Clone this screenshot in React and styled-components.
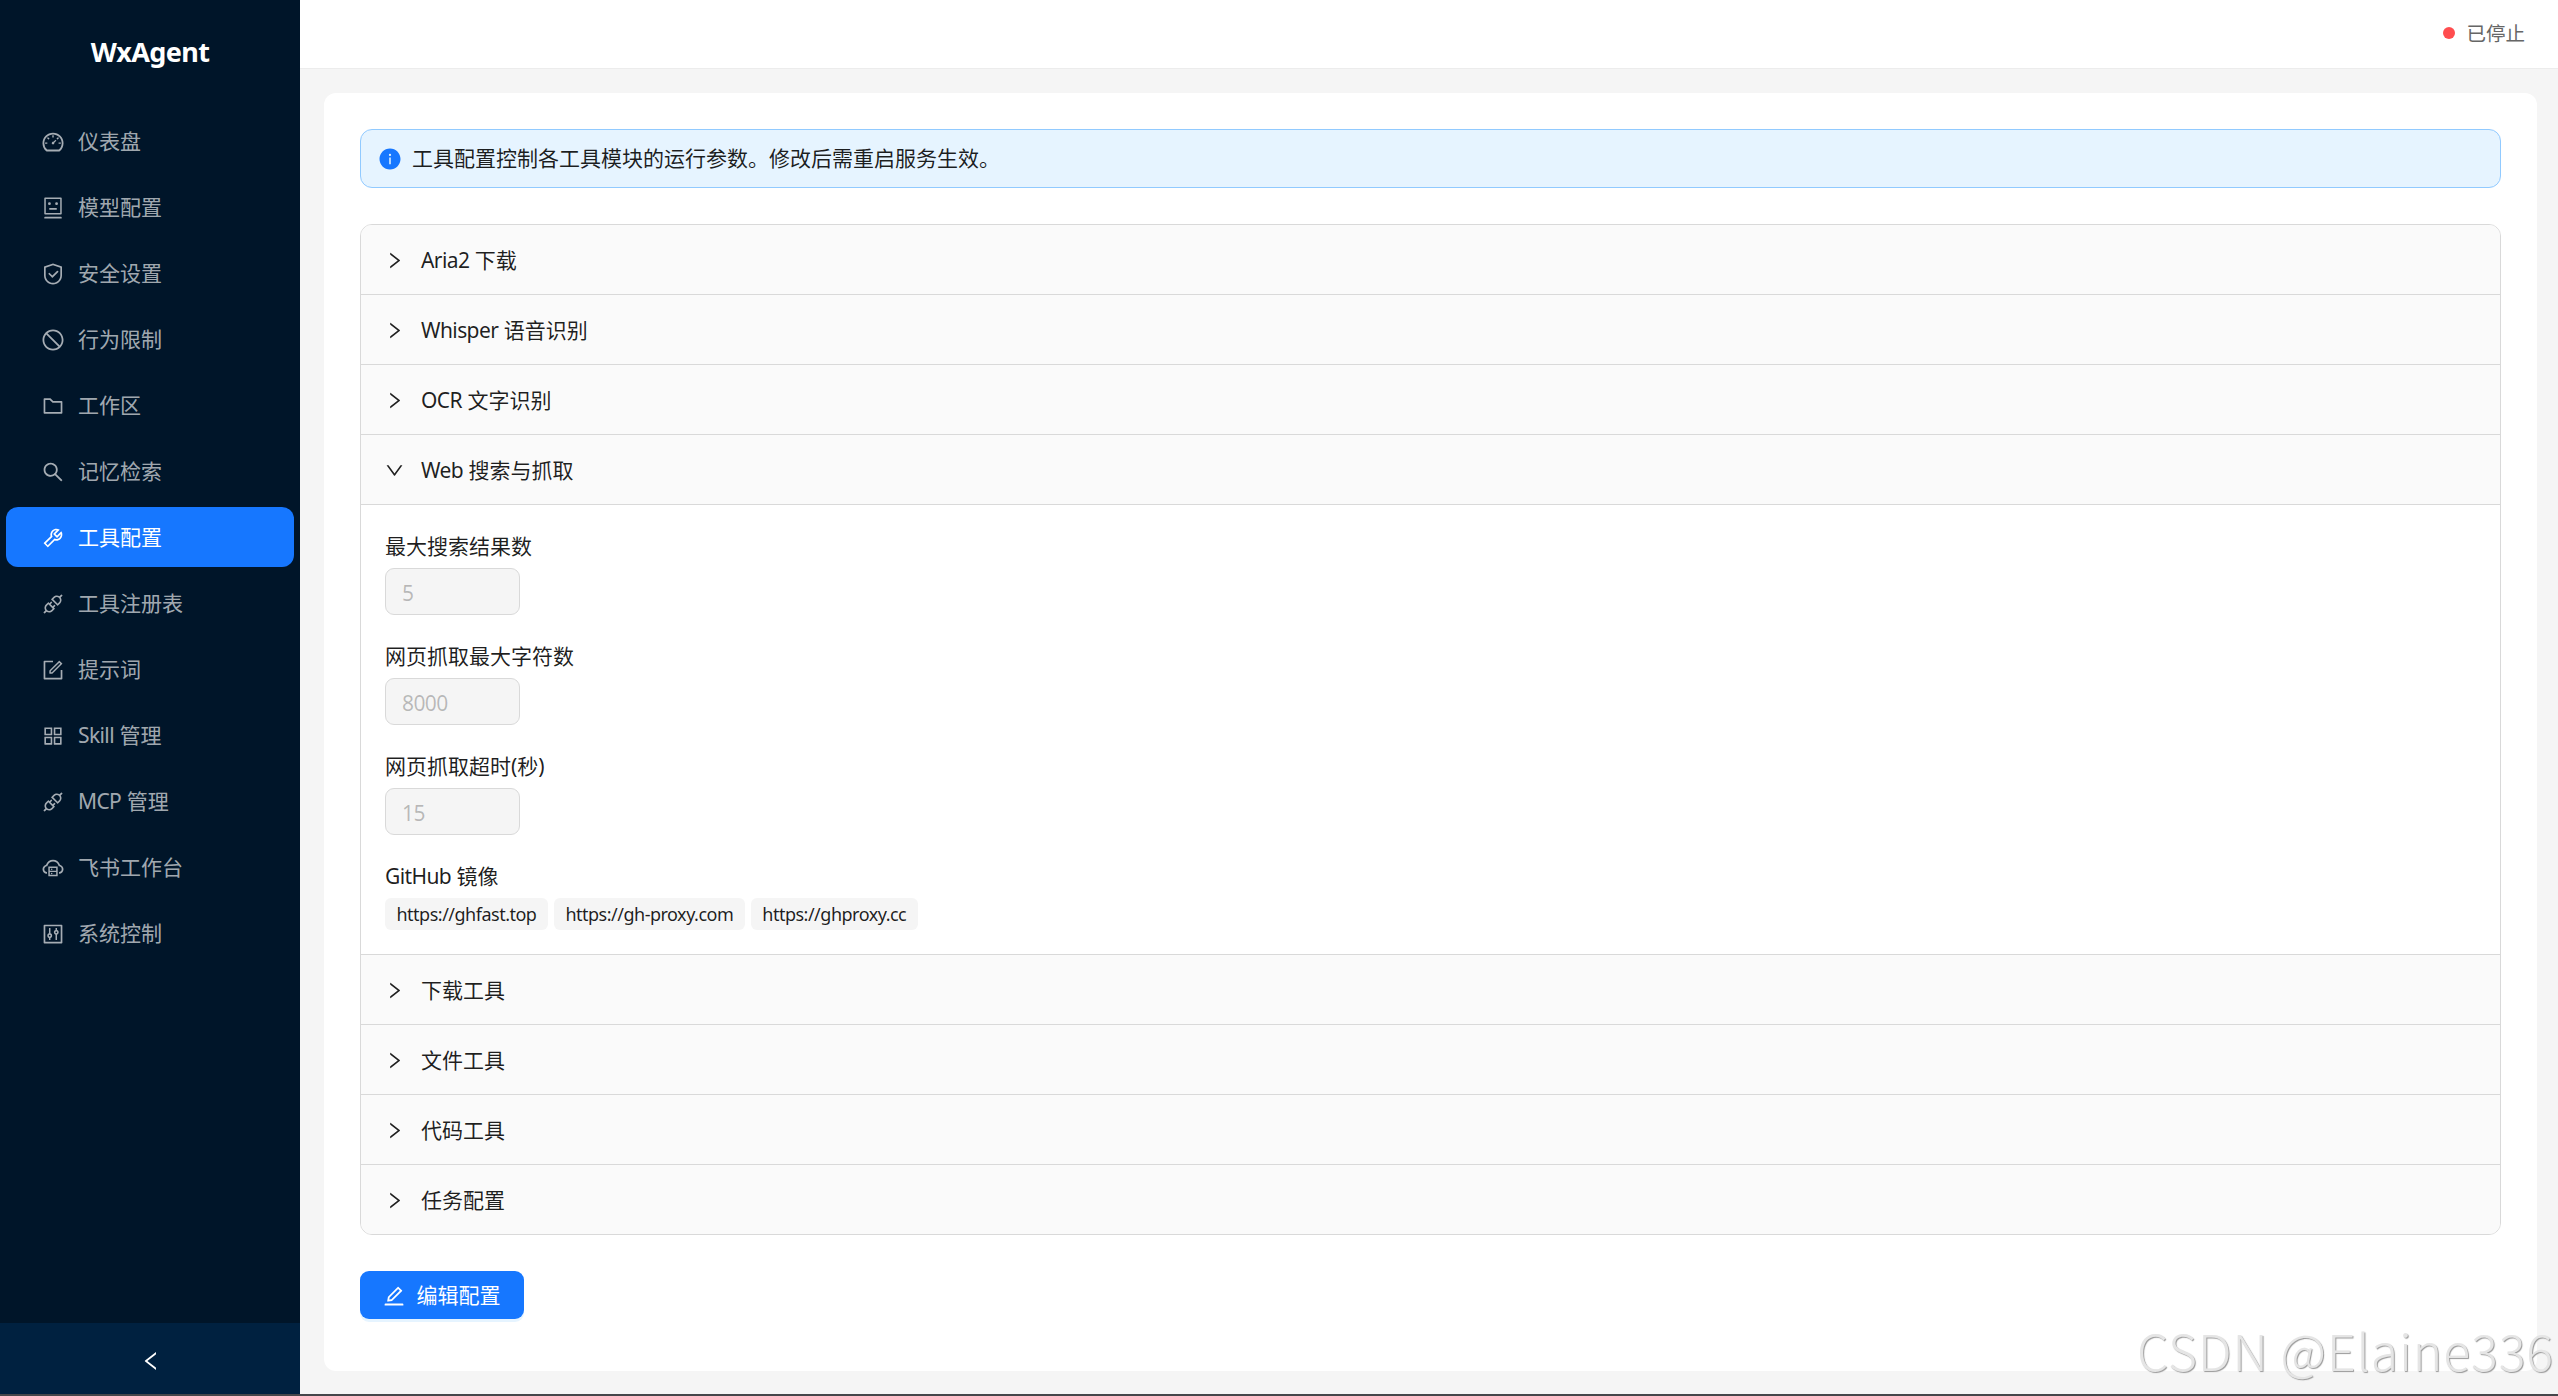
import React, { useState } from "react";
import styled, { createGlobalStyle } from "styled-components";
import {
    AiOutlineDashboard,
    AiOutlineRobot,
    AiOutlineSafety,
    AiOutlineStop,
    AiOutlineFolder,
    AiOutlineSearch,
    AiOutlineTool,
    AiOutlineApi,
    AiOutlineForm,
    AiOutlineAppstore,
    AiOutlineCloudServer,
    AiOutlineControl,
    AiOutlineLeft,
    AiOutlineRight,
    AiOutlineDown,
    AiOutlineEdit,
    AiFillInfoCircle,
} from "react-icons/ai";


const GlobalStyle = createGlobalStyle`
* {
box-sizing: border-box;
}
body {
margin: 0;
background: #f5f5f5;
color: rgba(0, 0, 0, 0.88);
font-family: "Noto Sans", "Noto Sans CJK SC", sans-serif;
font-size: 21px;
line-height: 33px;
overflow: hidden;
}
svg {
display: block;
flex-shrink: 0;
}
`

const Page = styled.div`
display: flex;
position: relative;
width: 100%;
height: 1396px;
border-bottom: 2px solid #45464a;
`

const Sider = styled.aside`
display: flex;
flex-direction: column;
flex-shrink: 0;
width: 300px;
background: #001529;
`

const Logo = styled.div`
height: 105px;
line-height: 104px;
text-align: center;
color: #fff;
font-weight: bold;
font-size: 27px;
letter-spacing: -0.6px;
`

const Menu = styled.nav`
display: flex;
flex-direction: column;
flex: 1;
gap: 6px;
padding: 6px;
`

const MenuItem = styled.div`
display: flex;
align-items: center;
gap: 13.5px;
height: 60px;
padding: 1px 34.5px 0;
border-radius: 12px;
cursor: pointer;
color: ${(props) => (props.$active ? "#fff" : "rgba(255, 255, 255, 0.65)")};
background: ${(props) => (props.$active ? "#1677ff" : "transparent")};
`

const Trigger = styled.div`
display: flex;
align-items: center;
justify-content: center;
height: 71px;
padding: 4px 0 0 1px;
background: #002140;
color: #fff;
`

const Main = styled.div`
display: flex;
flex-direction: column;
flex: 1;
min-width: 0;
`

const Header = styled.header`
display: flex;
align-items: center;
justify-content: flex-end;
gap: 11.5px;
height: 69px;
padding: 0 33px 2px 0;
background: #fff;
border-bottom: 1px solid #ececec;
`

const StatusDot = styled.span`
width: 12px;
height: 12px;
border-radius: 50%;
background: #ff4d4f;
`

const StatusText = styled.span`
font-size: 19.5px;
color: #666;
`

const Card = styled.main`
display: flex;
flex-direction: column;
align-items: flex-start;
gap: 36px;
flex: 1;
margin: 24px 21px 23px 24px;
padding: 36px;
border-radius: 12px;
background: #fff;
`

const Alert = styled.div`
display: flex;
align-items: center;
gap: 10.5px;
width: 100%;
height: 59px;
padding: 0 16.5px;
border: 1px solid #91caff;
border-radius: 12px;
background: #e6f4ff;

svg {
color: #1677ff;
}
`

const Collapse = styled.div`
width: 100%;
border: 1px solid #d9d9d9;
border-radius: 12px;
overflow: hidden;
`

const Panel = styled.section`
& + & {
border-top: 1px solid #d9d9d9;
}
`

const PanelHeader = styled.div`
display: flex;
align-items: center;
gap: 16.5px;
height: 69px;
padding: 1px 22.5px 0;
background: #fafafa;
cursor: pointer;
`

const PanelBody = styled.div`
display: flex;
flex-direction: column;
gap: 24px;
height: 450px;
padding: 24px;
border-top: 1px solid #d9d9d9;
background: #fff;
`

const Field = styled.div`
display: flex;
flex-direction: column;
gap: 6px;
`

const FieldLabel = styled.label`
height: 33px;
padding-top: 1px;
`

const NumberInput = styled.input`
width: 135px;
height: 47px;
padding: 2px 16px 0;
border: 1px solid #d9d9d9;
border-radius: 9px;
background: #f5f5f5;
color: rgba(0, 0, 0, 0.25);
font: inherit;
letter-spacing: -0.6px;
`

const TagList = styled.div`
display: flex;
gap: 6px;
`

const Tag = styled.span`
height: 32px;
padding: 0 11.5px;
border-radius: 6px;
background: #f5f5f5;
font-size: 18px;
line-height: 32px;
letter-spacing: -0.5px;
`

const Latin = styled.span`
letter-spacing: -0.6px;
`

const EditButton = styled.button`
display: flex;
align-items: center;
gap: 10.5px;
height: 48px;
padding: 1px 23.5px 0 22px;
border: none;
border-radius: 9px;
background: #1677ff;
box-shadow: 0 3px 0 rgba(5, 145, 255, 0.1);
color: #fff;
font: inherit;
cursor: pointer;
`

const Watermark = styled.div`
position: absolute;
right: 4px;
bottom: 15px;
color: #e5e5e5;
font-family: "Noto Sans CJK SC", sans-serif;
font-weight: 300;
font-size: 50px;
line-height: 60px;
letter-spacing: 0.9px;
white-space: nowrap;
text-shadow: 1px 1px 1px #999;
pointer-events: none;
`


const menus = [
    { name: "仪表盘", icon: AiOutlineDashboard },
    { name: "模型配置", icon: AiOutlineRobot },
    { name: "安全设置", icon: AiOutlineSafety },
    { name: "行为限制", icon: AiOutlineStop },
    { name: "工作区", icon: AiOutlineFolder },
    { name: "记忆检索", icon: AiOutlineSearch },
    { name: "工具配置", icon: AiOutlineTool },
    { name: "工具注册表", icon: AiOutlineApi },
    { name: "提示词", icon: AiOutlineForm },
    { name: "Skill 管理", icon: AiOutlineAppstore },
    { name: "MCP 管理", icon: AiOutlineApi },
    { name: "飞书工作台", icon: AiOutlineCloudServer },
    { name: "系统控制", icon: AiOutlineControl },
]

const panels = [
    "Aria2 下载",
    "Whisper 语音识别",
    "OCR 文字识别",
    "Web 搜索与抓取",
    "下载工具",
    "文件工具",
    "代码工具",
    "任务配置",
]

const fields = [
    { label: "最大搜索结果数", value: 5 },
    { label: "网页抓取最大字符数", value: 8000 },
    { label: "网页抓取超时(秒)", value: 15 },
]

const mirrors = ["https://ghfast.top", "https://gh-proxy.com", "https://ghproxy.cc"]


// tightens the leading latin word of a mixed title
function Title({ text }) {
    const [, latin, rest] = text.match(/^([A-Za-z0-9]+)?(.*)$/)
    return <span>{latin && <Latin>{latin}</Latin>}{rest}</span>
}

function WebSearchSettings() {
    return (
        <PanelBody>
            {fields.map((field) => (
                <Field key={field.label}>
                    <FieldLabel>{field.label}</FieldLabel>
                    <NumberInput disabled value={field.value} />
                </Field>
            ))}
            <Field>
                <FieldLabel><Title text="GitHub 镜像" /></FieldLabel>
                <TagList>
                    {mirrors.map((url) => <Tag key={url}>{url}</Tag>)}
                </TagList>
            </Field>
        </PanelBody>
    )
}

function App() {

    const [current, setCurrent] = useState("工具配置")
    const [open, setOpen] = useState("Web 搜索与抓取")

    return (
        <Page>
            <GlobalStyle />
            <Sider>
                <Logo>WxAgent</Logo>
                <Menu>
                    {menus.map(({ name, icon: Icon }) => (
                        <MenuItem key={name} $active={name === current} onClick={() => setCurrent(name)}>
                            <Icon size={24} />
                            <Title text={name} />
                        </MenuItem>
                    ))}
                </Menu>
                <Trigger><AiOutlineLeft size={24} /></Trigger>
            </Sider>
            <Main>
                <Header>
                    <StatusDot />
                    <StatusText>已停止</StatusText>
                </Header>
                <Card>
                    <Alert>
                        <AiFillInfoCircle size={24} />
                        <span>工具配置控制各工具模块的运行参数。修改后需重启服务生效。</span>
                    </Alert>
                    <Collapse>
                        {panels.map((title) => (
                            <Panel key={title}>
                                <PanelHeader onClick={() => setOpen(open === title ? null : title)}>
                                    {open === title ? <AiOutlineDown size={21} /> : <AiOutlineRight size={21} />}
                                    <Title text={title} />
                                </PanelHeader>
                                {open === title && title === "Web 搜索与抓取" && <WebSearchSettings />}
                            </Panel>
                        ))}
                    </Collapse>
                    <EditButton>
                        <AiOutlineEdit size={24} />
                        <span>编辑配置</span>
                    </EditButton>
                </Card>
            </Main>
            <Watermark>CSDN @Elaine336</Watermark>
        </Page>
    )
}

export default App;
